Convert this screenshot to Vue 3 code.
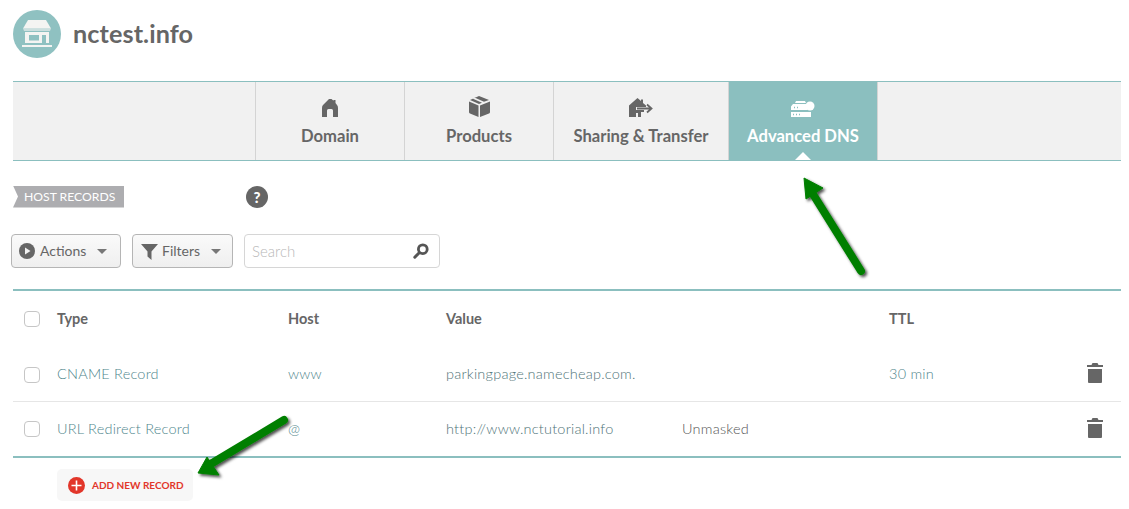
<script setup>
const tabs = [
  { label: 'Domain', icon: 'home', cls: 'w149' },
  { label: 'Products', icon: 'box', cls: 'w149' },
  { label: 'Sharing & Transfer', icon: 'share', cls: 'w175' },
  { label: 'Advanced DNS', icon: 'dns', cls: 'w149 active' }
]
const rows = [
  { type: 'CNAME Record', host: 'www', value: 'parkingpage.namecheap.com.', extra: '', ttl: '30 min' },
  { type: 'URL Redirect Record', host: '@', value: 'http://www.nctutorial.info', extra: 'Unmasked', ttl: '' }
]
</script>

<template>
  <div class="page">
    <header class="head">
      <div class="logo">
        <svg width="30" height="28" viewBox="0 0 30 28">
          <path d="M6 0h18l5 8.500H1z" fill="#f4f4f2" />
          <path d="M1 8.500h28l-1 2.500H2z" fill="#f4f4f2" opacity=".6" />
          <path fill-rule="evenodd" d="M3 12h24v11H3zM7 15v5.500h10V15zM20 15v8h4v-8z" fill="#f4f4f2" />
          <rect x="0" y="25" width="30" height="2" fill="#f4f4f2" />
        </svg>
      </div>
      <h1>nctest.info</h1>
    </header>

    <nav class="tabs">
      <div class="spacer"></div>
      <div v-for="t in tabs" :key="t.label" class="tab" :class="t.cls">
        <svg v-if="t.icon === 'home'" width="16" height="18" viewBox="0 0 16 18">
          <path d="M7 0h2.500l2 1.800V1h2v3l1.500 2q1 1.200 1 3v9h-5v-6.500q0-1.500-1.500-1.500h-3Q5 10 5 11.500V18H0V9q0-1.800 1-3z" fill="#666" />
        </svg>
        <svg v-else-if="t.icon === 'box'" width="21" height="21" viewBox="0 0 21 21">
          <path d="M10 0L1 4l9 4 3-1.300-9-4 2-.9 9 4 5-1.800z" fill="#666" />
          <path d="M0 5.500l9.500 4V21L1 17.500Q0 17 0 16zM21 5.500l-10 4V21l9-3.500q1-.5 1-1.500z" fill="#666" />
        </svg>
        <svg v-else-if="t.icon === 'share'" width="24" height="19" viewBox="0 0 24 19">
          <path d="M8.500 0l3.500 3V1.500h2V5l3 2.600V9H7v3h8v2h-3v5H9v-4H7v4H0V7.500z" fill="#666" />
          <path d="M8 10.500h14M18 6.500l4.500 4-4.500 4" fill="none" stroke="#666" stroke-width="1.800" />
        </svg>
        <svg v-else width="24" height="16" viewBox="0 0 24 16">
          <circle cx="19" cy="5" r="4.500" fill="#fff" />
          <path d="M5 0h9l1 2H4zM2 3h13v3.500H16V9H0V5.500z" fill="#fff" />
          <path d="M0 11h20v5H0z" fill="#fff" />
          <path d="M2 13.500h1M5 13.500h1M8 13.500h1M3 6.500h1M6 6.500h1" stroke="#8bbfbf" stroke-width="1.500" />
        </svg>
        <span>{{ t.label }}</span>
        <i v-if="t.cls.includes('active')" class="caret"></i>
      </div>
    </nav>

    <div class="section">
      <div class="tag">HOST RECORDS</div>
      <div class="help">?</div>
    </div>

    <div class="toolbar">
      <button class="btn actions">
        <svg width="16" height="16" viewBox="0 0 16 16">
          <circle cx="8" cy="8" r="8" fill="#666" />
          <path d="M6 4.500l5.500 3.500L6 11.500z" fill="#f2f2f2" />
        </svg>
        <span>Actions</span>
        <i class="down"></i>
      </button>
      <button class="btn filters">
        <svg width="17" height="17" viewBox="0 0 17 17">
          <path d="M0 1h17L10.500 8.500V17L6.500 13.500V8.500z" fill="#666" />
        </svg>
        <span>Filters</span>
        <i class="down"></i>
      </button>
      <div class="search">
        <span>Search</span>
        <svg width="16" height="16" viewBox="0 0 16 16">
          <circle cx="9.800" cy="6.200" r="4.400" fill="none" stroke="#555" stroke-width="2.800" />
          <path d="M6 10L1.800 14.200" stroke="#555" stroke-width="3" stroke-linecap="round" />
        </svg>
      </div>
    </div>

    <section class="table">
      <div class="row header">
        <i class="check"></i>
        <span>Type</span>
        <span>Host</span>
        <span>Value</span>
        <span></span>
        <span>TTL</span>
      </div>
      <div v-for="r in rows" :key="r.type" class="row body">
        <i class="check"></i>
        <span>{{ r.type }}</span>
        <span>{{ r.host }}</span>
        <span class="value">{{ r.value }}</span>
        <span class="extra">{{ r.extra }}</span>
        <span>{{ r.ttl }}</span>
        <svg class="trash" width="16" height="20" viewBox="0 0 16 20">
          <path d="M5.500 0h5l1 2H16v2H0V2h4.500z" fill="#666" />
          <path d="M1 6h14v13q0 1-1 1H2q-1 0-1-1z" fill="#666" />
        </svg>
      </div>
    </section>

    <div class="add-wrap">
      <button class="add">
        <svg width="17" height="17" viewBox="0 0 17 17">
          <circle cx="8.500" cy="8.500" r="8.500" fill="#e2362a" />
          <path d="M8.500 3.500v10M3.500 8.500h10" stroke="#fff" stroke-width="1.600" />
        </svg>
        <span>ADD NEW RECORD</span>
      </button>
    </div>

    <svg class="arrows" width="1129" height="509" viewBox="0 0 1129 509">
      <defs>
        <filter id="sh" x="-30%" y="-30%" width="160%" height="160%">
          <feDropShadow dx="2" dy="2" stdDeviation="1.500" flood-color="#000" flood-opacity=".7" />
        </filter>
      </defs>
      <g filter="url(#sh)" fill="#047f04" stroke="#047f04">
        <path d="M811 191L861 271" fill="none" stroke-width="8" stroke-linecap="round" />
        <path d="M804 178L823 188L806 199z" stroke-width="1" />
        <path d="M209 465L284 420" fill="none" stroke-width="8" stroke-linecap="round" />
        <path d="M198 473L207 457L219 475z" stroke-width="1" />
      </g>
    </svg>
  </div>
</template>

<style>
html, body { margin: 0; background: #fff; }
</style>

<style scoped>
.page {
  position: relative;
  width: 1129px;
  height: 509px;
  overflow: hidden;
  box-sizing: border-box;
  padding: 10px 8px 0 13px;
  font-family: Lato, "Open Sans", sans-serif;
  color: #666;
}
.head { display: flex; align-items: center; gap: 12px; height: 48px; }
.logo {
  width: 48px; height: 48px; border-radius: 50%; background: #8fc1c1;
  display: flex; align-items: center; justify-content: center;
}
h1 { margin: 0 0 2px; font-size: 25.200px; font-weight: 700; color: #666; letter-spacing: .1px; }

.tabs {
  display: flex; height: 80px; margin-top: 23px; box-sizing: border-box;
  background: #f1f1f1; border-top: 1px solid #8bbfbf; border-bottom: 1px solid #8bbfbf;
}
.spacer { width: 242px; }
.tab {
  position: relative; box-sizing: border-box; border-left: 1px solid #d4d4d4;
  display: flex; flex-direction: column; align-items: center;
  font-size: 16.600px; font-weight: 700; color: #666;
}
.tab svg { position: absolute; bottom: 43px; }
.tab span { position: absolute; top: 44px; line-height: 20px; white-space: nowrap; }
.w149 { width: 149px; }
.w175 { width: 175px; }
.active { width: 150px; background: #8bbfbf; color: #fff; border-left-color: #d4d4d4; border-right: 1px solid #d4d4d4; }
.caret {
  position: absolute; bottom: 0; left: 66px;
  border-left: 8px solid transparent; border-right: 8px solid transparent; border-bottom: 8px solid #fff;
}

.section { display: flex; align-items: center; margin-top: 24px; height: 23px; }
.tag {
  width: 111px; height: 22px; box-sizing: border-box; padding-left: 11px;
  background: #adadb0; color: #fff; font-size: 12.200px; line-height: 22px; white-space: nowrap;
  clip-path: polygon(0 0, 100% 0, 100% 100%, 0 100%, 5px 50%);
}
.help {
  width: 22px; height: 22px; margin-left: 122px; border-radius: 50%; background: #666; color: #fff;
  font-size: 15px; font-weight: 900; line-height: 22px; text-align: center;
}

.toolbar { display: flex; margin: 26px 0 0 -2px; height: 34px; }
.btn {
  box-sizing: border-box; height: 34px; display: flex; align-items: center; padding: 0 0 2px 7px;
  border: 1px solid #b5b5b5; border-radius: 4px; background: linear-gradient(#fafafa, #efefef);
  font-family: inherit; font-size: 14px; color: #666;
}
.btn svg { margin-top: 2px; }
.btn span { margin-left: 5px; }
.actions { width: 110px; }
.filters { width: 101px; margin-left: 11px; }
.filters svg { margin-left: 1px; }
.filters span { margin-left: 4px; }
.down {
  margin: 2px 0 0 11px; border-left: 5px solid transparent; border-right: 5px solid transparent;
  border-top: 5px solid #777;
}
.search {
  box-sizing: border-box; width: 196px; height: 34px; margin-left: 11px; padding: 0 10px 0 7px;
  border: 1px solid #d6d6d6; border-radius: 4px; background: #fff;
  display: flex; align-items: center; justify-content: space-between;
  font-size: 15px; font-weight: 300; color: #b8b8b8;
}

.table { margin-top: 21px; border-top: 2px solid #8bbfbf; border-bottom: 2px solid #8bbfbf; }
.row {
  position: relative; display: grid;
  grid-template-columns: 44px 231px 158px 236px 207px 1fr;
  align-items: center; font-size: 14.500px;
}
.header { height: 55px; font-weight: 700; box-sizing: border-box; }
.body { height: 54px; box-sizing: border-box; padding-bottom: 2px; color: #4f868c; font-weight: 300; letter-spacing: .22px; }
.body:nth-child(2) { height: 56px; padding-bottom: 0; border-bottom: 1px solid #e6e6e6; }
.body .value { color: #4f7478; }
.body .extra { color: #555; }
.check {
  display: block; width: 14px; height: 14px; margin-left: 11px;
  border: 1px solid #c6c6c6; border-radius: 4px; background: #fff;
}
.body .check { margin-top: 2px; }
.trash { position: absolute; right: 18px; top: 17px; }
.body:nth-child(3) .trash { top: 16px; }

.add-wrap { padding: 11px 0 0 44px; }
.add {
  box-sizing: border-box; width: 136px; height: 32px; display: flex; align-items: center; gap: 7px;
  padding: 0 0 0 11px; border: 0; border-radius: 5px; background: #f7f7f7;
  font-family: inherit; font-size: 10px; font-weight: 700; color: #e2362a;
}
.arrows { position: absolute; left: 0; top: 0; pointer-events: none; }
</style>
